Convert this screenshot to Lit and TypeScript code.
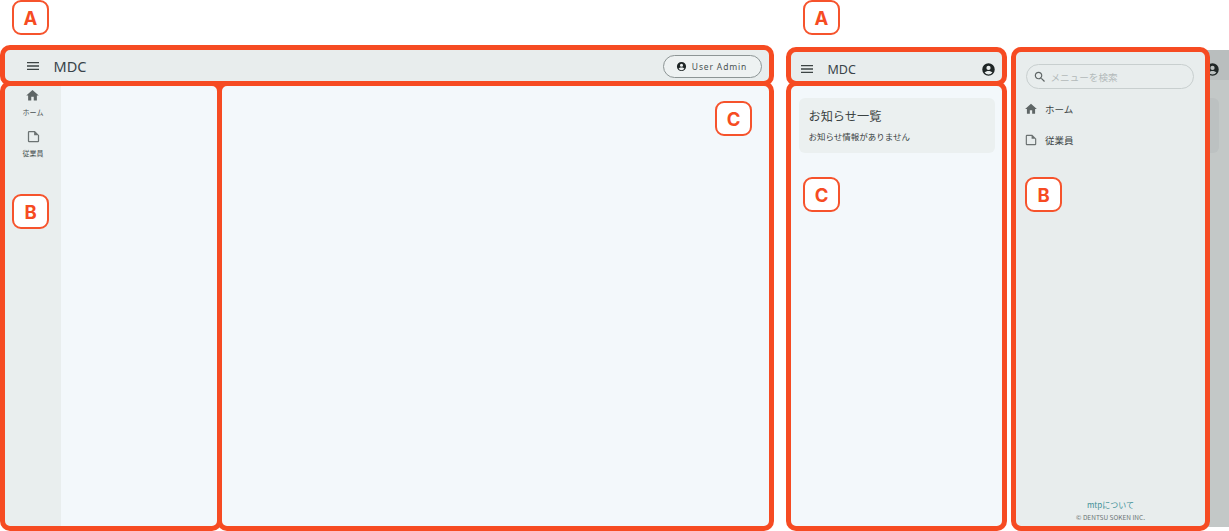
import { LitElement, html, css } from "lit";
import { customElement } from "lit/decorators.js";

const homeIcon = (s: number) => html`<svg width=${s} height=${s} viewBox="0 0 24 24" fill="#5f6666"><path d="M10 20v-6h4v6h5v-8h3L12 3 2 12h3v8z"/></svg>`;
const docIcon = (s: number) => html`<svg width=${s} height=${s} viewBox="0 0 24 24" fill="#6b7272"><path d="M14.2 3H5a2 2 0 0 0-2 2v14a2 2 0 0 0 2 2h14a2 2 0 0 0 2-2V9.8L14.2 3zM19 19H5V5h8v5h6v9z"/></svg>`;
const menuIcon = html`<svg width="16" height="16" viewBox="0 0 24 24" fill="#3c4444"><path d="M3 18h18v-2H3v2zm0-5h18v-2H3v2zm0-7v2h18V6H3z"/></svg>`;
const accountIcon = (s: number) => html`<svg width=${s} height=${s} viewBox="0 0 24 24" fill="#1f2626"><path d="M12 2a10 10 0 1 0 0 20 10 10 0 0 0 0-20zm0 4a3.4 3.4 0 1 1 0 6.8A3.4 3.4 0 0 1 12 6zm0 14a8 8 0 0 1-6.3-3.1c.9-1.8 3.9-2.7 6.3-2.7s5.4.9 6.3 2.7A8 8 0 0 1 12 20z"/></svg>`;
const searchIcon = html`<svg width="14" height="14" viewBox="0 0 24 24" fill="#5f6666"><path d="M15.5 14h-.79l-.28-.27C15.41 12.59 16 11.11 16 9.5 16 5.91 13.09 3 9.5 3S3 5.91 3 9.5 5.91 16 9.5 16c1.61 0 3.09-.59 4.23-1.57l.27.28v.79l5 4.99L20.49 19l-4.99-5zm-6 0C7.01 14 5 11.99 5 9.5S7.01 5 9.5 5 14 7.01 14 9.5 11.99 14 9.5 14z"/></svg>`;

@customElement("app-root")
export class AppRoot extends LitElement {
  static styles = css`
    :host { display: block; width: 1229px; height: 531px; overflow: hidden; background: #fff;
      font-family: "Noto Sans CJK JP", "Noto Sans", sans-serif; color: #2f3737; }
    .stage { position: relative; display: flex; width: 1229px; height: 531px; padding-top: 50px; box-sizing: border-box; align-items: flex-start; }
    svg { display: block; flex: none; }

    .desk { margin-left: 5px; width: 764px; height: 477px; display: flex; flex-direction: column; }
    .bar { flex: none; background: #e8eded; display: flex; align-items: center; }
    .desk .bar { height: 31px; padding: 1px 7px 0 19.5px; box-sizing: border-box; }
    .brand { font-family: "Noto Sans", sans-serif; font-size: 14.5px; margin-left: 13px; color: #38444a; }
    .pill { margin-left: auto; width: 99px; height: 23px; box-sizing: border-box; border: 1px solid #8d9595; border-radius: 12px;
      display: flex; align-items: center; justify-content: center; gap: 5px; padding-right: 2px; font-family: "Noto Sans", sans-serif; font-size: 8.5px; letter-spacing: 0.85px; color: #4a5252; background: #eef2f2; }
    .deskbody { flex: 1; display: flex; background: #f3f8fb; min-height: 0; }
    .rail { width: 56px; background: #e9eeee; display: flex; flex-direction: column; align-items: center; padding-top: 7px; box-sizing: border-box; }
    .railitem { display: flex; flex-direction: column; align-items: center; height: 41px; }
    .railitem span { font-size: 7px; line-height: 11px; margin-top: 4px; color: #4a5252; }

    .phone { margin-left: 22px; margin-top: 2px; width: 211px; height: 475px; display: flex; flex-direction: column; background: #f3f8fb; }
    .phone .bar { height: 29px; box-sizing: border-box; padding: 5px 6.5px 0 7.5px; }
    .phone .brand { font-size: 12.5px; margin-left: 13px; }
    .phone .end { margin-left: auto; }
    .content { padding: 17px 7px 0 8px; box-shadow: inset 0 2px 2px -1px #e3e8e9; }
    .card { height: 55px; box-sizing: border-box; padding: 10px 9.5px; background: #ebf0f0; border-radius: 6px; }
    .card h2 { margin: 0; font-size: 12.2px; font-weight: 400; line-height: 17px; color: #3a4242; }
    .card p { margin: 5px 0 0; font-size: 8.5px; line-height: 12px; color: #3a4242; }

    .right { margin-left: 14px; width: 213px; height: 477px; display: flex; background: #c3c8c7; }
    .drawer { width: 189px; flex: none; background: #e8eded; display: flex; flex-direction: column; box-sizing: border-box; padding: 14px 11px 5px 10px; }
    .search { height: 25px; width: 168px; box-sizing: border-box; border: 1px solid #c8cfcf; border-radius: 13px; display: flex; align-items: center; gap: 3.5px; padding-left: 6px;
      font-size: 9.6px; color: #b3baba; }
    .item { display: flex; align-items: center; gap: 7px; height: 31px; font-size: 9.5px; color: #3d4545; margin-left: -2px; }
    .items { margin-top: 4.5px; }
    .foot { margin-top: auto; text-align: center; margin-left: -10px; margin-right: -11px; }
    .foot a { display: block; font-size: 8px; line-height: 11px; color: #3f9097; }
    .foot small { display: block; font-size: 6.5px; line-height: 9px; margin-top: 3px; color: #6c7474; }
    .scrim { flex: 1; display: flex; flex-direction: column; overflow: hidden; }
    .scrimbar { height: 30px; flex: none; display: flex; align-items: center; padding: 8px 0 0 0; box-sizing: border-box; background: #b9bebe; }
    .scrimcard { height: 55px; width: 14px; margin-top: 18px; background: #bcc1c1; border-radius: 0 6px 6px 0; }

    .box { position: absolute; box-sizing: border-box; border: 5px solid #f64b22; border-radius: 10px; pointer-events: none; }
    .tag { position: absolute; box-sizing: border-box; width: 37px; height: 35px; border: 2.5px solid #f6532c; border-radius: 9px; background: #fff;
      display: flex; align-items: center; justify-content: center; font-family: "Inter", sans-serif; font-weight: 700; font-size: 18.5px; color: #f64b22; }
  `;

  private place(x: number, y: number, w: number, h: number) {
    return `left:${x}px;top:${y}px;width:${w}px;height:${h}px`;
  }

  render() {
    const boxes: number[][] = [
      [0, 45, 774, 41], [0, 81, 222, 450], [217, 81, 557, 450],
      [786, 47, 221, 39], [786, 81, 221, 450], [1011, 47, 199, 484],
    ];
    const tags: [string, number, number][] = [
      ["A", 12, 0], ["B", 12, 194], ["C", 715, 101],
      ["A", 803, 0], ["C", 803, 177], ["B", 1025, 177],
    ];
    return html`<div class="stage">
      <section class="desk">
        <header class="bar">${menuIcon}<span class="brand">MDC</span>
          <div class="pill">${accountIcon(11)}<span>User Admin</span></div>
        </header>
        <div class="deskbody">
          <nav class="rail">
            <div class="railitem">${homeIcon(15)}<span>ホーム</span></div>
            <div class="railitem">${docIcon(15)}<span>従業員</span></div>
          </nav>
        </div>
      </section>

      <section class="phone">
        <header class="bar">${menuIcon}<span class="brand">MDC</span><span class="end">${accountIcon(15)}</span></header>
        <div class="content">
          <div class="card"><h2>お知らせ一覧</h2><p>お知らせ情報がありません</p></div>
        </div>
      </section>

      <section class="right">
        <aside class="drawer">
          <div class="search">${searchIcon}<span>メニューを検索</span></div>
          <div class="items">
            <div class="item">${homeIcon(14)}<span>ホーム</span></div>
            <div class="item">${docIcon(14)}<span>従業員</span></div>
          </div>
          <div class="foot"><a>mtpについて</a><small>© DENTSU SOKEN INC.</small></div>
        </aside>
        <div class="scrim">
          <div class="scrimbar">${accountIcon(15)}</div>
          <div class="scrimcard"></div>
        </div>
      </section>

      ${boxes.map((b) => html`<div class="box" style=${this.place(b[0], b[1], b[2], b[3])}></div>`)}
      ${tags.map((t) => html`<div class="tag" style="left:${t[1]}px;top:${t[2]}px">${t[0]}</div>`)}
    </div>`;
  }
}
